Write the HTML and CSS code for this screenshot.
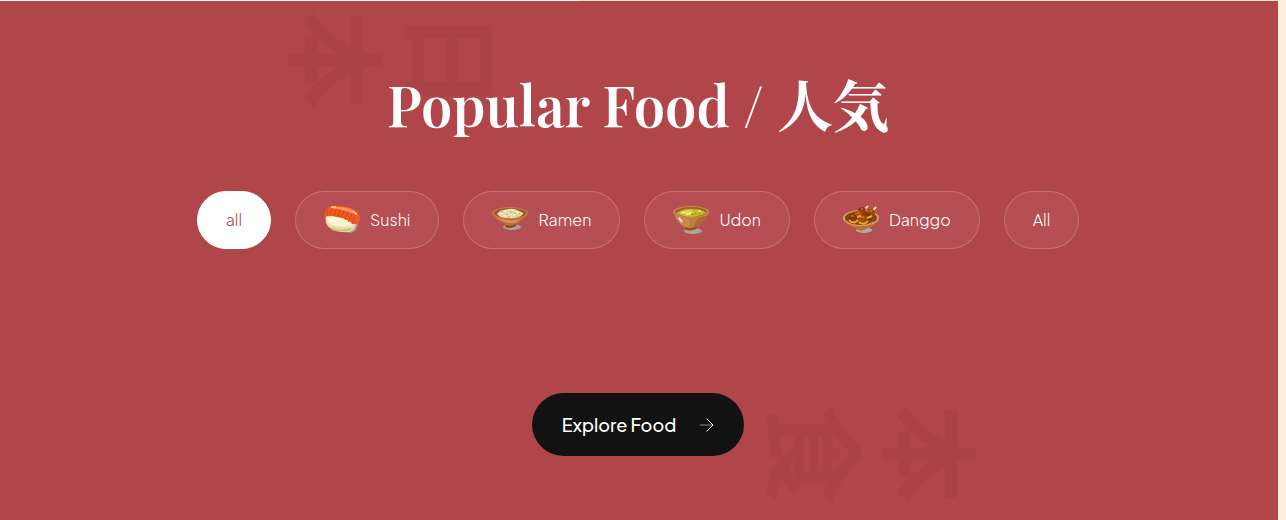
FILE: index.html
```html
<!DOCTYPE html>
<html lang="en">
<head>
<meta charset="utf-8">
<meta name="viewport" content="width=device-width, initial-scale=1">
<title>Popular Food</title>
<link rel="stylesheet" href="styles.css">
</head>
<body>
<section class="popular">
  <div class="watermark watermark-top" lang="ja" aria-hidden="true">日<br>本</div>
  <div class="watermark watermark-bottom" lang="ja" aria-hidden="true">本<br>食</div>
  <h2 class="title">Popular Food / <span class="title-ja" lang="ja">人気</span></h2>
  <div class="filters">
    <button class="chip chip-active" type="button">all</button>
    <button class="chip" type="button">
      <svg class="dish" viewBox="0 0 36 36">
        <path d="M20 24L34 20Q34 30 26 31L18 29Z" fill="#a59b98"/>
        <path d="M2 13Q0 22 6 26Q14 31 25 30Q32 28 32 20Z" fill="#e6dda8"/>
        <path d="M2 13Q2 20 7 23Q16 26 28 24L29 18L8 9Z" fill="#f8f2cf"/>
        <path d="M4 16Q7 19 12 20" fill="none" stroke="#fffdf0" stroke-width="2"/>
        <path d="M8 27Q18 30 27 27" fill="none" stroke="#cfc184" stroke-width="2"/>
        <path d="M0 14Q2 5 7 4Q22 3 31 8Q37 12 36 18Q34 23 29 22Q22 16 13 15Q5 13 1 15Z" fill="#f2591f"/>
        <path d="M7 5Q22 4 30 9L34 14Q24 8 7 6Z" fill="#ff9463"/>
        <path d="M4 8L3 13M8 7L6 13M12 7L10 14M16 8L14 15M20 9L17 16M24 10L21 18M28 12L24 20M31 15L28 22" fill="none" stroke="#d0480f" stroke-width="1"/>
        <path d="M7 5L12 5M29 9L33 12" fill="none" stroke="#fff0df" stroke-width="1"/>
      </svg>
      Sushi
    </button>
    <button class="chip" type="button">
      <svg class="dish" viewBox="0 0 36 36">
        <ellipse cx="20" cy="25" rx="9" ry="3" fill="#a8a19d"/>
        <path d="M0 11Q3 18 12 21L14 25Q19 27 24 24L25 21Q34 17 36 10Z" fill="#b96c37"/>
        <path d="M3 15Q16 24 25 20L32 15Q22 22 3 15Z" fill="#dc9152"/>
        <ellipse cx="18" cy="11" rx="18" ry="6" fill="#c77b43"/>
        <ellipse cx="18" cy="11" rx="16" ry="5" fill="#9a5a2c"/>
        <path d="M5 12Q8 8 12 8Q21 5 27 9Q33 11 30 13Q25 17 15 16Q8 16 5 12Z" fill="#e9d9a5"/>
        <path d="M8 12l3-1M12 9l3 1M16 12l2 1M19 8l3 1M24 10l3 1M21 13l3-1M11 14l3 0M18 15l2 0" stroke="#fff8d5"/>
        <path d="M9 10l2 0M14 12l2 1M18 10l3 0M22 11l2 1M26 12l2 0M16 15l2 0M24 14l2 0" stroke="#c3a664"/>
        <path d="M14 24Q19 26 24 23" fill="none" stroke="#874519" stroke-width="2"/>
      </svg>
      Ramen
    </button>
    <button class="chip" type="button">
      <svg class="dish" viewBox="0 0 36 36">
        <ellipse cx="20" cy="29" rx="9" ry="3" fill="#aaa49d"/>
        <path d="M0 9Q3 19 11 25L12 28Q18 31 24 27L25 24Q34 17 36 9Z" fill="#c17c45"/>
        <path d="M2 14Q5 21 12 25Q18 27 16 17Z" fill="#cb8750"/>
        <path d="M25 16L34 13Q29 23 20 26Z" fill="#ad6736"/>
        <ellipse cx="18" cy="10" rx="18" ry="6" fill="#cd8b55"/>
        <ellipse cx="18" cy="10" rx="16" ry="5" fill="#9b642b"/>
        <path d="M3 11Q13 6 20 7Q29 7 33 11Q28 14 18 15Q7 14 3 11Z" fill="#c9b91d"/>
        <path d="M7 11Q14 7 20 9L16 13Z" fill="#e1d75c"/>
        <path d="M8 11l4-1M13 13l5-2M25 9l3 0" fill="none" stroke="#fffce2" stroke-width="1"/>
        <path d="M22 11l1 1M26 12l1-1M19 12l1 1" stroke="#796f17"/>
        <path d="M6 16l3 4" stroke="#fff2d8" stroke-width="2"/>
        <path d="M12 26Q18 29 24 25" fill="none" stroke="#8b4c21" stroke-width="2"/>
      </svg>
      Udon
    </button>
    <button class="chip" type="button">
      <svg class="dish" viewBox="0 0 36 36">
        <ellipse cx="21" cy="28" rx="8" ry="3" fill="#b0aaa6"/>
        <path d="M0 15Q2 23 11 26Q18 31 25 26Q34 23 36 15Z" fill="#b77032"/>
        <ellipse cx="18" cy="16" rx="18" ry="8" fill="#dea15d"/>
        <ellipse cx="18" cy="16" rx="16" ry="7" fill="#80451d"/>
        <path d="M20 9L25 4M28 11L33 5" stroke="#f1d39a" stroke-width="2"/>
        <circle cx="19" cy="9" r="4" fill="#8d3e0c"/>
        <circle cx="15" cy="13" r="4" fill="#b0550d"/>
        <circle cx="10" cy="17" r="5" fill="#833709"/>
        <circle cx="28" cy="11" r="4" fill="#9b490d"/>
        <circle cx="25" cy="15" r="4" fill="#7c3508"/>
        <circle cx="20" cy="18" r="5" fill="#a14c0c"/>
        <path d="M6 18Q10 23 15 18M16 20Q21 24 25 19M24 16l5-2M14 15l4-1" fill="none" stroke="#f0aa24" stroke-width="2"/>
        <path d="M8 14l3 0M18 15l3 0M18 7l2 0M27 9l2 0M14 11l2 0" stroke="#df873a"/>
        <path d="M4 20Q16 28 31 20" fill="none" stroke="#d59551"/>
      </svg>
      Danggo
    </button>
    <button class="chip" type="button">All</button>
  </div>
  <a class="explore" href="#">Explore Food
    <svg class="arrow" viewBox="0 0 14 14" aria-hidden="true"><path class="arrow-line" d="M0 7H13"/><path d="M6.500 .5L13 7L6.500 13.500"/></svg>
  </a>
</section>
</body>
</html>
```
FILE: styles.css
```css
* {
  box-sizing: border-box;
}

body {
  margin: 0;
  padding: 1px 8px 0 0;
  background: linear-gradient(90deg, #fff 45%, #ffefdc 45%);
  font-family: "Plus Jakarta Sans", Inter, sans-serif;
}

.popular {
  position: relative;
  display: flex;
  flex-direction: column;
  align-items: center;
  padding: 61px 26px 64px 24px;
  overflow: hidden;
  background: #b1464a;
  color: #fff;
}

.watermark {
  position: absolute;
  color: #a94347;
  font: 700 100px/116px "Noto Sans CJK JP", sans-serif;
  writing-mode: vertical-rl;
  text-orientation: sideways;
}

.watermark-top {
  top: 9px;
  left: 282px;
}

.watermark-bottom {
  right: 286px;
  bottom: 16px;
}

.title {
  position: relative;
  margin: 0;
  font: 600 56px/84px "Playfair Display", "Noto Serif CJK JP", serif;
  text-align: center;
}

.title-ja {
  font-weight: 700;
}

.filters {
  position: relative;
  display: flex;
  flex-wrap: wrap;
  justify-content: center;
  gap: 24px;
  margin-top: 45px;
}

.chip {
  display: flex;
  align-items: center;
  gap: 10px;
  height: 58px;
  padding: 0 28px;
  border: 1px solid rgb(255 255 255 / 20%);
  border-radius: 30px;
  background: rgb(255 255 255 / 5%);
  color: #fff;
  font: 300 16px/24px "Plus Jakarta Sans", Inter, sans-serif;
  cursor: pointer;
}

.chip-active {
  border-color: #fff;
  background: #fff;
  color: #b1464a;
}

.dish {
  width: 36px;
  height: 36px;
}

.explore {
  position: relative;
  display: flex;
  align-items: center;
  gap: 24px;
  height: 63px;
  margin-top: 144px;
  padding: 0 30px;
  border-radius: 32px;
  background: #121212;
  color: #fff;
  font-size: 18px;
  font-weight: 500;
  line-height: 24px;
  text-decoration: none;
}

.arrow {
  width: 14px;
  height: 14px;
  fill: none;
  stroke: #fff;
}

.arrow-line {
  stroke: #888;
}
```
